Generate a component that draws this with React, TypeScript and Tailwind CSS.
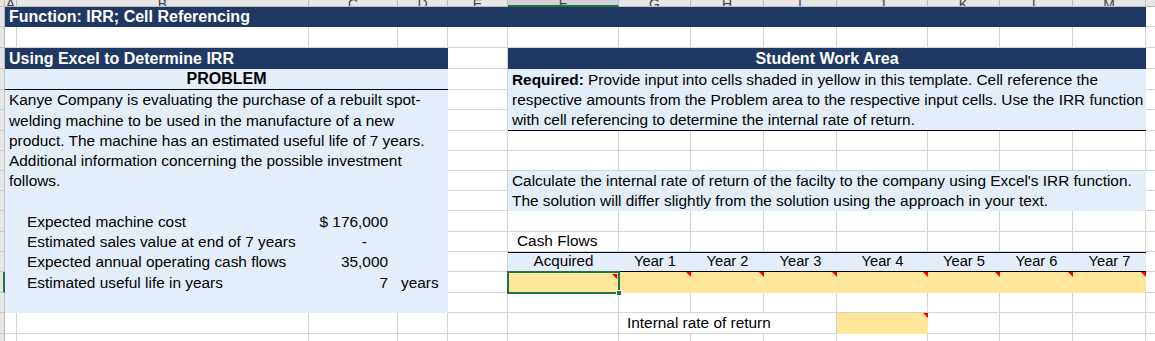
import React from "react";

// sheet colours
const navy = "bg-[#203864] text-white font-bold text-[16px]";
const blue = "bg-[#e4eefa]";
const txt = "flex items-end pb-[1px] whitespace-nowrap";

function Blank({ w, children, className = "" }: { w: string; children?: React.ReactNode; className?: string }) {
  return <div className={`${w} shrink-0 border-r border-b border-[#d4d4d4] ${txt} ${className}`}>{children}</div>;
}

function Yellow({ w, selected = false }: { w: string; selected?: boolean }) {
  return (
    <div className={`${w} shrink-0 relative bg-[#ffe699]`}>
      <span className={`absolute ${selected ? "top-[2px] right-[2px]" : "top-0 right-0"} w-0 h-0 border-l-[5px] border-l-transparent border-t-[5px] border-t-[#ff0000]`} />
      {selected && (
        <>
          <span className="absolute -left-px -top-px -right-px -bottom-px border-2 border-[#217346] z-10" />
          <span className="absolute -right-[3px] -bottom-[3px] w-[6px] h-[6px] bg-[#217346] border border-white z-20" />
        </>
      )}
    </div>
  );
}

function Row({ h, sel = false, children }: { h: string; sel?: boolean; children: React.ReactNode }) {
  return (
    <div className={`flex ${h}`}>
      <div
        className={`w-[5px] shrink-0 bg-[#e6e6e6] border-b border-b-[#c8c8c8] ${
          sel ? "border-r-2 border-r-[#217346]" : "border-r border-r-[#bdbdbd]"
        }`}
      />
      {children}
      <div className="flex-1 border-b border-[#d4d4d4]" />
    </div>
  );
}

// row cells for the white F..M area
function RightBlanks() {
  return (
    <>
      <Blank w="w-[111px]" />
      <Blank w="w-[72px]" />
      <Blank w="w-[73px]" />
      <Blank w="w-[73px]" />
      <Blank w="w-[91px]" />
      <Blank w="w-[72px]" />
      <Blank w="w-[73px]" />
      <Blank w="w-[73px]" />
    </>
  );
}

function LeftBlanks() {
  return (
    <>
      <Blank w="w-[12px]" />
      <Blank w="w-[292px]" />
      <Blank w="w-[89px]" />
      <Blank w="w-[50px]" />
    </>
  );
}

const E = () => <Blank w="w-[60px]" />;

function Item({ label, value, unit }: { label: string; value?: string; unit?: string }) {
  return (
    <div className={`w-[443px] shrink-0 flex ${blue}`}>
      <div className="w-[12px]" />
      <div className={`w-[292px] pl-[10px] ${txt}`}>{label}</div>
      <div className={`w-[89px] justify-end ${value === "-" ? "pr-[31px]" : "pr-[10px]"} ${txt}`}>{value}</div>
      <div className={`w-[50px] pl-[3px] ${txt}`}>{unit}</div>
    </div>
  );
}

const heads = [
  { l: "A", w: "w-[12px]" },
  { l: "B", w: "w-[292px]" },
  { l: "C", w: "w-[89px]" },
  { l: "D", w: "w-[50px]" },
  { l: "E", w: "w-[60px]" },
  { l: "F", w: "w-[111px]" },
  { l: "G", w: "w-[72px]" },
  { l: "H", w: "w-[73px]" },
  { l: "I", w: "w-[73px]" },
  { l: "J", w: "w-[91px]" },
  { l: "K", w: "w-[72px]" },
  { l: "L", w: "w-[73px]" },
  { l: "M", w: "w-[73px]" },
];

const years = [
  { y: "Year 1", w: "w-[72px]" },
  { y: "Year 2", w: "w-[73px]" },
  { y: "Year 3", w: "w-[73px]" },
  { y: "Year 4", w: "w-[91px]" },
  { y: "Year 5", w: "w-[72px]" },
  { y: "Year 6", w: "w-[73px]" },
  { y: "Year 7", w: "w-[73px]" },
];

export default function App() {
  return (
    <div className="w-[1155px] h-[341px] overflow-hidden bg-white text-black text-[15.4px] leading-[18px] font-['Liberation_Sans',Arial,sans-serif]">
      {/* column headers, mostly scrolled out of view */}
      <div className="flex h-[7px] overflow-hidden">
        <div className="w-[5px] shrink-0 bg-[#e6e6e6] border-r border-b border-[#bdbdbd]" />
        {heads.map((c) => (
          <div
            key={c.l}
            className={`${c.w} shrink-0 flex items-end justify-center overflow-hidden border-r border-[#bdbdbd] text-[#444] text-[14px] leading-[16px] ${
              c.l === "F" ? "bg-[#d2d2d2] border-b-2 border-b-[#217346]" : "bg-[#e6e6e6] border-b border-b-[#bdbdbd]"
            }`}
          >
            <span className="mb-[-6px]">{c.l}</span>
          </div>
        ))}
        <div className="flex-1 bg-[#e6e6e6] border-b border-[#bdbdbd]" />
      </div>

      <Row h="h-[20px]">
        <div className={`w-[1141px] shrink-0 pl-[4px] ${navy} ${txt}`}>Function: IRR; Cell Referencing</div>
      </Row>

      <Row h="h-[21px]">
        <LeftBlanks />
        <E />
        <RightBlanks />
      </Row>

      <Row h="h-[21px]">
        <div className={`w-[443px] shrink-0 pl-[4px] ${navy} ${txt}`}>Using Excel to Determine IRR</div>
        <E />
        <div className={`w-[638px] shrink-0 justify-center ${navy} ${txt}`}>Student Work Area</div>
      </Row>

      <Row h="h-[21px]">
        <div className={`w-[443px] shrink-0 justify-center font-bold text-[16px] border-b border-black ${blue} ${txt}`}>PROBLEM</div>
        <E />
        <div className={`w-[638px] shrink-0 pl-[4px] ${blue} ${txt}`}>
          <span>
            <b>Required:</b> Provide input into cells shaded in yellow in this template. Cell reference the
          </span>
        </div>
      </Row>

      <Row h="h-[20px]">
        <div className={`w-[443px] shrink-0 pl-[4px] ${blue} ${txt}`}>Kanye Company is evaluating the purchase of a rebuilt spot-</div>
        <E />
        <div className={`w-[638px] shrink-0 pl-[4px] ${blue} ${txt}`}>
          respective amounts from the Problem area to the respective input cells. Use the IRR function
        </div>
      </Row>

      <Row h="h-[21px]">
        <div className={`w-[443px] shrink-0 pl-[4px] ${blue} ${txt}`}>welding machine to be used in the manufacture of a new</div>
        <E />
        <div className={`w-[638px] shrink-0 pl-[4px] border-b border-black ${blue} ${txt}`}>
          with cell referencing to determine the internal rate of return.
        </div>
      </Row>

      <Row h="h-[20px]">
        <div className={`w-[443px] shrink-0 pl-[4px] ${blue} ${txt}`}>product. The machine has an estimated useful life of 7 years.</div>
        <E />
        <RightBlanks />
      </Row>

      <Row h="h-[20px]">
        <div className={`w-[443px] shrink-0 pl-[4px] ${blue} ${txt}`}>Additional information concerning the possible investment</div>
        <E />
        <RightBlanks />
      </Row>

      <Row h="h-[20px]">
        <div className={`w-[443px] shrink-0 pl-[4px] ${blue} ${txt}`}>follows.</div>
        <E />
        <div className={`w-[638px] shrink-0 pl-[4px] ${blue} ${txt}`}>
          Calculate the internal rate of return of the facilty to the company using Excel's IRR function.
        </div>
      </Row>

      <Row h="h-[20px]">
        <div className={`w-[443px] shrink-0 ${blue}`} />
        <E />
        <div className={`w-[638px] shrink-0 pl-[4px] ${blue} ${txt}`}>
          The solution will differ slightly from the solution using the approach in your text.
        </div>
      </Row>

      <Row h="h-[21px]">
        <Item label="Expected machine cost" value="$ 176,000" />
        <E />
        <RightBlanks />
      </Row>

      <Row h="h-[20px]">
        <Item label="Estimated sales value at end of 7 years" value="-" />
        <E />
        <Blank w="w-[111px]" className="pl-[9px]">
          Cash Flows
        </Blank>
        {years.map((c) => (
          <Blank key={c.y} w={c.w} />
        ))}
      </Row>

      <Row h="h-[20px]">
        <Item label="Expected annual operating cash flows" value="35,000" />
        <E />
        <div className={`flex w-[638px] shrink-0 border-t border-b border-black text-[14.67px] ${blue}`}>
          <div className={`w-[111px] justify-center text-[15.2px] ${txt}`}>Acquired</div>
          {years.map((c) => (
            <div key={c.y} className={`${c.w} justify-center ${txt}`}>
              {c.y}
            </div>
          ))}
        </div>
      </Row>

      <Row h="h-[21px]" sel>
        <Item label="Estimated useful life in years" value="7" unit="years" />
        <E />
        <Yellow w="w-[111px]" selected />
        {years.map((c) => (
          <Yellow key={c.y} w={c.w} />
        ))}
      </Row>

      <Row h="h-[20px]">
        <div className={`w-[443px] shrink-0 ${blue}`} />
        <E />
        <RightBlanks />
      </Row>

      <Row h="h-[21px]">
        <LeftBlanks />
        <E />
        <Blank w="w-[111px]" />
        <Blank w="w-[218px]" className="pl-[8px]">
          Internal rate of return
        </Blank>
        <Yellow w="w-[91px]" />
        <Blank w="w-[72px]" />
        <Blank w="w-[73px]" />
        <Blank w="w-[73px]" />
      </Row>

      <Row h="h-[21px]">
        <LeftBlanks />
        <E />
        <RightBlanks />
      </Row>
    </div>
  );
}
